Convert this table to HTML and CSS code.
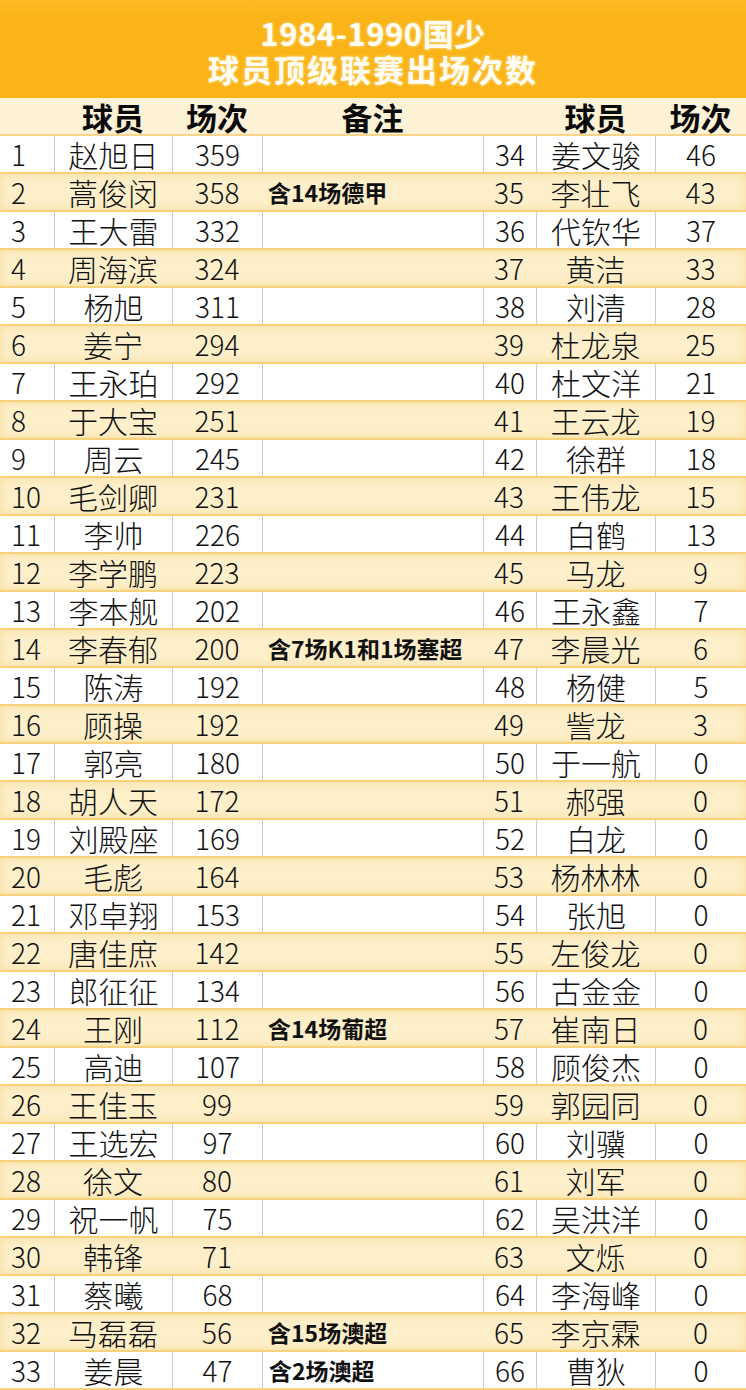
FILE: index.html
```html
<!DOCTYPE html>
<html lang="zh-CN">
<head>
<meta charset="utf-8">
<title>1984-1990国少球员顶级联赛出场次数</title>
<link rel="stylesheet" href="styles.css">
</head>
<body>
<div class="sheet">
  <header class="title">
    <div class="t1">1984-1990国少</div>
    <div class="t2">球员顶级联赛出场次数</div>
  </header>
  <div class="row head">
    <div class="c"></div><div class="c">球员</div><div class="c">场次</div><div class="c">备注</div><div class="c"></div><div class="c">球员</div><div class="c">场次</div>
  </div>
  <div id="rows"></div>
</div>
<script src="app.js"></script>
</body>
</html>
```
FILE: app.js
```js
var left = [
["1","赵旭日","359",""],["2","蒿俊闵","358","含14场德甲"],["3","王大雷","332",""],["4","周海滨","324",""],
["5","杨旭","311",""],["6","姜宁","294",""],["7","王永珀","292",""],["8","于大宝","251",""],
["9","周云","245",""],["10","毛剑卿","231",""],["11","李帅","226",""],["12","李学鹏","223",""],
["13","李本舰","202",""],["14","李春郁","200","含7场K1和1场塞超"],["15","陈涛","192",""],["16","顾操","192",""],
["17","郭亮","180",""],["18","胡人天","172",""],["19","刘殿座","169",""],["20","毛彪","164",""],
["21","邓卓翔","153",""],["22","唐佳庶","142",""],["23","郎征征","134",""],["24","王刚","112","含14场葡超"],
["25","高迪","107",""],["26","王佳玉","99",""],["27","王选宏","97",""],["28","徐文","80",""],
["29","祝一帆","75",""],["30","韩锋","71",""],["31","蔡曦","68",""],["32","马磊磊","56","含15场澳超"],
["33","姜晨","47","含2场澳超"]];
var right = [
["34","姜文骏","46"],["35","李壮飞","43"],["36","代钦华","37"],["37","黄洁","33"],["38","刘清","28"],
["39","杜龙泉","25"],["40","杜文洋","21"],["41","王云龙","19"],["42","徐群","18"],["43","王伟龙","15"],
["44","白鹤","13"],["45","马龙","9"],["46","王永鑫","7"],["47","李晨光","6"],["48","杨健","5"],
["49","訾龙","3"],["50","于一航","0"],["51","郝强","0"],["52","白龙","0"],["53","杨林林","0"],
["54","张旭","0"],["55","左俊龙","0"],["56","古金金","0"],["57","崔南日","0"],["58","顾俊杰","0"],
["59","郭园同","0"],["60","刘骥","0"],["61","刘军","0"],["62","吴洪洋","0"],["63","文烁","0"],
["64","李海峰","0"],["65","李京霖","0"],["66","曹狄","0"]];
var box = document.getElementById("rows");
var html = "";
for (var i = 0; i < left.length; i++) {
  var l = left[i], r = right[i];
  html += '<div class="row ' + (i % 2 ? "alt" : "plain") + '">' +
    '<div class="c num">' + l[0] + '</div>' +
    '<div class="c name">' + l[1] + '</div>' +
    '<div class="c cnt">' + l[2] + '</div>' +
    '<div class="c note">' + l[3] + '</div>' +
    '<div class="c num">' + r[0] + '</div>' +
    '<div class="c name">' + r[1] + '</div>' +
    '<div class="c cnt">' + r[2] + '</div>' +
    '</div>';
}
box.innerHTML = html;
```
FILE: styles.css
```css
html, body {
  margin: 0;
  padding: 0;
  background: #ffffff;
}
.sheet {
  width: 746px;
  font-family: "Noto Sans CJK SC", "Noto Sans", sans-serif;
  color: #111;
}
.title {
  height: 98px;
  box-sizing: border-box;
  padding-top: 17px;
  background: linear-gradient(#fcbb22, #fbb418 20%, #fbb418);
  color: #fffdf4;
  text-align: center;
  font-weight: 700;
  font-size: 31px;
  line-height: 1;
  display: flex;
  flex-direction: column;
  align-items: center;
  gap: 5px;
  text-shadow: 0 0 3px rgba(255, 236, 180, 0.9);
}
.t1 { letter-spacing: 0.5px; }
.t2 { letter-spacing: 2px; }

.row {
  display: grid;
  grid-template-columns: 54px 118px 90px 221px 53px 119px 91px;
  height: 38px;
  box-sizing: border-box;
  border-bottom: 2px solid #f7d27c;
}
.c {
  display: flex;
  align-items: center;
  justify-content: center;
  white-space: nowrap;
  line-height: 1;
}
.head {
  background: #fdf1d6;
  font-weight: 700;
  font-size: 31px;
  color: #0a0a0a;
  border-bottom-color: #f8d58a;
}
.plain {
  background: #ffffff;
}
.plain .c + .c {
  border-left: 1px solid #cbcbcb;
}
.alt {
  background: #fdefca;
  box-shadow: inset 0 0 8px rgba(246, 204, 110, 0.55);
}
.num {
  justify-content: flex-start;
  padding-left: 11px;
  font-size: 28px;
  font-weight: 300;
}
.name {
  font-size: 30px;
  font-weight: 300;
}
.cnt {
  font-size: 28px;
  font-weight: 300;
}
.note {
  justify-content: flex-start;
  padding-left: 6px;
  font-size: 23px;
  font-weight: 700;
}
```
